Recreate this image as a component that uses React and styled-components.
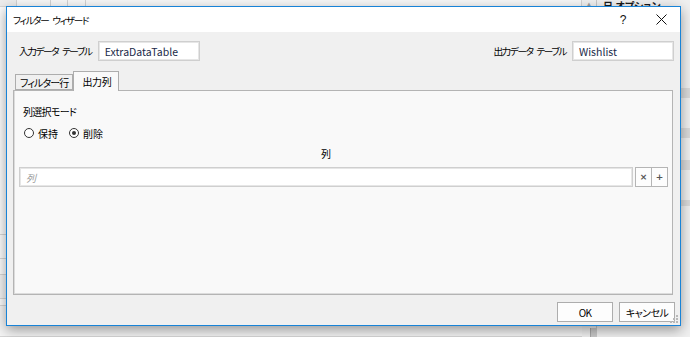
import React from "react";
import styled, { createGlobalStyle } from "styled-components";

const FONT = `"Noto Sans CJK JP", "Noto Sans", sans-serif`;

const Global = createGlobalStyle`
  html, body { margin: 0; padding: 0; }
  body {
    width: 690px; height: 337px; overflow: hidden;
    background: #f0f0f0;
    font-family: ${FONT};
    font-feature-settings: "palt";
  }
`;

/* ---------- background application (behind the dialog) ---------- */
const Desktop = styled.div`
  position: relative;
  width: 690px;
  height: 337px;
  overflow: hidden;
`;

const Backdrop = styled.div`
  display: flex;
  width: 100%;
  height: 100%;
`;

const SheetArea = styled.div`
  flex: 1;
  display: flex;
  flex-direction: column;
  background: #fbfbfb;
`;

const SheetRow = styled.div`
  display: flex;
  height: ${(p) => p.$h}px;
  border-bottom: 1px solid #d6d6d6;
  background: ${(p) => p.$bg || "#fbfbfb"};
`;

const SheetCell = styled.div`
  width: ${(p) => p.$w}px;
  flex: ${(p) => (p.$grow ? 1 : "none")};
  border-right: 1px solid #d2d2d2;
  background: ${(p) => p.$bg || "transparent"};
`;

const VScroll = styled.div`
  width: 14px;
  display: flex;
  flex-direction: column;
  background: #f0f0f0;
  border-right: 1px solid #c8c8c8;
`;

const ScrollArrow = styled.div`
  height: 12px;
  font-size: 7px;
  color: #a0a0a0;
  text-align: center;
  line-height: 10px;
  font-family: "DejaVu Sans", sans-serif;
`;

const ScrollThumb = styled.div`
  margin: 318px 0 0 8px;
  width: 6px;
  height: 20px;
  background: #c9c9c9;
  border-left: 1px solid #a8a8a8;
`;

const SidePane = styled.div`
  width: 93px;
  display: flex;
  flex-direction: column;
  background: #f0f0f0;
`;

const SideHeader = styled.div`
  height: 12px;
  padding-left: 6px;
  font-size: 10px;
  font-weight: bold;
  line-height: 12px;
  color: #1a1a1a;
  white-space: nowrap;
`;

const SideRow = styled.div`
  height: ${(p) => p.$h}px;
  background: ${(p) => (p.$dark ? "#dadada" : "#f0f0f0")};
`;

/* ---------- dialog window ---------- */
const Window = styled.div`
  position: absolute;
  left: 6px;
  top: 6px;
  width: 675px;
  height: 320px;
  box-sizing: border-box;
  border: 1px solid #1883d7;
  background: #f0f0f0;
  display: flex;
  flex-direction: column;
  box-shadow: 0 4px 12px rgba(0, 0, 0, 0.38);
  color: #000;
  font-size: 10px;
`;

const TitleBar = styled.div`
  height: 25px;
  flex: none;
  display: flex;
  align-items: center;
  background: #fff;
`;

const Title = styled.div`
  flex: 1;
  padding-left: 6px;
  font-size: 9.6px;
  letter-spacing: -1.3px;
  word-spacing: 3px;
  color: #000;
`;

const TitleButton = styled.div`
  width: 38px;
  height: 25px;
  display: flex;
  align-items: center;
  justify-content: center;
  font-size: 12px;
  font-family: "Liberation Sans", sans-serif;
  color: #111;
`;

const Body = styled.div`
  flex: 1;
  display: flex;
  flex-direction: column;
  padding: 9px 7px 3px 6px;
  min-height: 0;
`;

const TableRow = styled.div`
  display: flex;
  justify-content: space-between;
  align-items: center;
  height: 20px;
  padding-left: 6px;
  margin-right: -1px;
`;

const Field = styled.div`
  display: flex;
  align-items: center;
  gap: 6px;
`;

const Label = styled.span`
  font-size: 9.6px;
  letter-spacing: -1.35px;
  word-spacing: 3px;
  white-space: nowrap;
`;

const TextBox = styled.div`
  width: 102px;
  height: 20px;
  box-sizing: border-box;
  border: 1px solid #cfcfcf;
  box-shadow: inset 0 0 0 1px #e6e6e6;
  background: #fff;
  padding-left: 6px;
  display: flex;
  align-items: center;
  font-size: 10.5px;
  color: #1b2a4a;
`;

const Tabs = styled.div`
  flex: 1;
  display: flex;
  flex-direction: column;
  margin-top: 10px;
  min-height: 0;
`;

const TabStrip = styled.div`
  display: flex;
  align-items: flex-end;
  height: 19px;
  padding-left: 2px;
  position: relative;
  z-index: 1;
`;

const Tab = styled.div`
  box-sizing: border-box;
  height: ${(p) => (p.$active ? 20 : 16)}px;
  margin-bottom: ${(p) => (p.$active ? -1 : 0)}px;
  padding: ${(p) => (p.$active ? "0 6px 0 8px" : "0 4px")};
  border: 1px solid #adadad;
  border-bottom: ${(p) => (p.$active ? "none" : "1px solid #adadad")};
  background: ${(p) => (p.$active ? "#f9f9f9" : "#f0f0f0")};
  display: flex;
  align-items: center;
  font-size: 10px;
  letter-spacing: ${(p) => (p.$active ? "-0.3px" : "-0.9px")};
  white-space: nowrap;
`;

const TabPanel = styled.div`
  flex: 1;
  box-sizing: border-box;
  border: 1px solid #b4b4b4;
  box-shadow: inset 1px -1px 0 #dcdcdc;
  background: #f9f9f9;
  display: flex;
  flex-direction: column;
  padding: 14px 4px 0 5px;
`;

const ModeGroup = styled.div`
  display: flex;
  flex-direction: column;
  gap: 7px;
  padding-left: 4px;
`;

const GroupTitle = styled.div`
  height: 14px;
  line-height: 14px;
  font-size: 10px;
  letter-spacing: -0.7px;
`;

const RadioRow = styled.div`
  display: flex;
  align-items: center;
  gap: 11px;
  height: 14px;
  padding-left: 1px;
`;

const RadioOption = styled.label`
  display: flex;
  align-items: center;
  gap: 4px;
  font-size: 10px;
`;

const RadioCircle = styled.span`
  width: 10px;
  height: 10px;
  box-sizing: border-box;
  border-radius: 50%;
  border: 1px solid #333;
  background: #fff;
  display: flex;
  align-items: center;
  justify-content: center;
  &::after {
    content: "";
    width: 4px;
    height: 4px;
    border-radius: 50%;
    background: ${(p) => (p.$checked ? "#333" : "transparent")};
  }
`;

const ColumnSection = styled.div`
  display: grid;
  grid-template-columns: 1fr auto;
  column-gap: 2px;
  row-gap: 6px;
  margin-top: 7px;
`;

const ColumnHeading = styled.div`
  grid-column: 1;
  text-align: center;
  height: 14px;
  line-height: 14px;
  font-size: 10px;
`;

const ColumnInput = styled.div`
  grid-column: 1;
  height: 20px;
  box-sizing: border-box;
  border: 1px solid #cfcfcf;
  box-shadow: inset 0 0 0 1px #e6e6e6;
  background: #fff;
  padding-left: 6px;
  display: flex;
  align-items: center;
  font-size: 10px;
  font-style: italic;
  color: #9a9a9a;
`;

const MiniButtons = styled.div`
  grid-column: 2;
  display: flex;
`;

const MiniButton = styled.div`
  width: 17px;
  height: 20px;
  box-sizing: border-box;
  border: 1px solid #b5b5b5;
  margin-left: ${(p) => (p.$first ? 0 : -1)}px;
  background: #fdfdfd;
  display: flex;
  align-items: center;
  justify-content: center;
  color: #555;
  font-family: "DejaVu Sans", sans-serif;
  font-size: 9px;
  font-weight: bold;
`;

const Footer = styled.div`
  display: flex;
  justify-content: flex-end;
  gap: 6px;
  margin-top: 7px;
  margin-right: -2px;
`;

const Button = styled.div`
  width: 56px;
  height: 20px;
  box-sizing: border-box;
  border: 1px solid #adadad;
  background: #fdfdfd;
  display: flex;
  align-items: center;
  justify-content: center;
  font-size: 10px;
  letter-spacing: -0.6px;
  color: #000;
`;

const Grip = styled.svg`
  position: absolute;
  right: 2px;
  bottom: 2px;
`;

function CloseIcon() {
  return (
    <svg width="11" height="11" viewBox="0 0 11 11">
      <path d="M0.5 0.5 L10.5 10.5 M10.5 0.5 L0.5 10.5" stroke="#111" strokeWidth="1" fill="none" />
    </svg>
  );
}

export default function App() {
  return (
    <Desktop>
      <Global />
      <Backdrop>
        <SheetArea>
          <SheetRow $h={6} $bg="#f7f7f7">
            <SheetCell $w={16} $bg="#ececec" />
            <SheetCell $w={33} />
            <SheetCell $w={16} />
            <SheetCell $w={17} />
            <SheetCell $grow />
          </SheetRow>
          <SheetRow $h={230} />
          <SheetRow $h={23} />
          <SheetRow $h={15} />
          <SheetRow $h={24} $bg="#f2f2f2" />
          <SheetRow $h={6} />
          <SheetRow $h={30} $bg="#f4f4f4" />
        </SheetArea>
        <VScroll>
          <ScrollArrow>▲</ScrollArrow>
          <ScrollThumb />
        </VScroll>
        <SidePane>
          <SideHeader>日 オプション</SideHeader>
          <SideRow $h={76} />
          <SideRow $h={10} $dark />
          <SideRow $h={30} />
          <SideRow $h={10} $dark />
          <SideRow $h={22} />
          <SideRow $h={10} $dark />
          <SideRow $h={30} />
          <SideRow $h={6} $dark />
        </SidePane>
      </Backdrop>

      <Window>
        <TitleBar>
          <Title>フィルター ウィザード</Title>
          <TitleButton>?</TitleButton>
          <TitleButton>
            <CloseIcon />
          </TitleButton>
        </TitleBar>
        <Body>
          <TableRow>
            <Field>
              <Label>入力データ テーブル</Label>
              <TextBox>ExtraDataTable</TextBox>
            </Field>
            <Field>
              <Label>出力データ テーブル</Label>
              <TextBox>Wishlist</TextBox>
            </Field>
          </TableRow>
          <Tabs>
            <TabStrip>
              <Tab>フィルター行</Tab>
              <Tab $active>出力列</Tab>
            </TabStrip>
            <TabPanel>
              <ModeGroup>
                <GroupTitle>列選択モード</GroupTitle>
                <RadioRow>
                  <RadioOption>
                    <RadioCircle />
                    保持
                  </RadioOption>
                  <RadioOption>
                    <RadioCircle $checked />
                    削除
                  </RadioOption>
                </RadioRow>
              </ModeGroup>
              <ColumnSection>
                <ColumnHeading>列</ColumnHeading>
                <div />
                <ColumnInput>列</ColumnInput>
                <MiniButtons>
                  <MiniButton $first>×</MiniButton>
                  <MiniButton>+</MiniButton>
                </MiniButtons>
              </ColumnSection>
            </TabPanel>
          </Tabs>
          <Footer>
            <Button>OK</Button>
            <Button>キャンセル</Button>
          </Footer>
        </Body>
        <Grip width="8" height="8" viewBox="0 0 8 8">
          <rect x="6" y="0" width="2" height="2" fill="#b8b8b8" />
          <rect x="3" y="3" width="2" height="2" fill="#b8b8b8" />
          <rect x="6" y="3" width="2" height="2" fill="#b8b8b8" />
          <rect x="0" y="6" width="2" height="2" fill="#b8b8b8" />
          <rect x="3" y="6" width="2" height="2" fill="#b8b8b8" />
          <rect x="6" y="6" width="2" height="2" fill="#b8b8b8" />
        </Grip>
      </Window>
    </Desktop>
  );
}
